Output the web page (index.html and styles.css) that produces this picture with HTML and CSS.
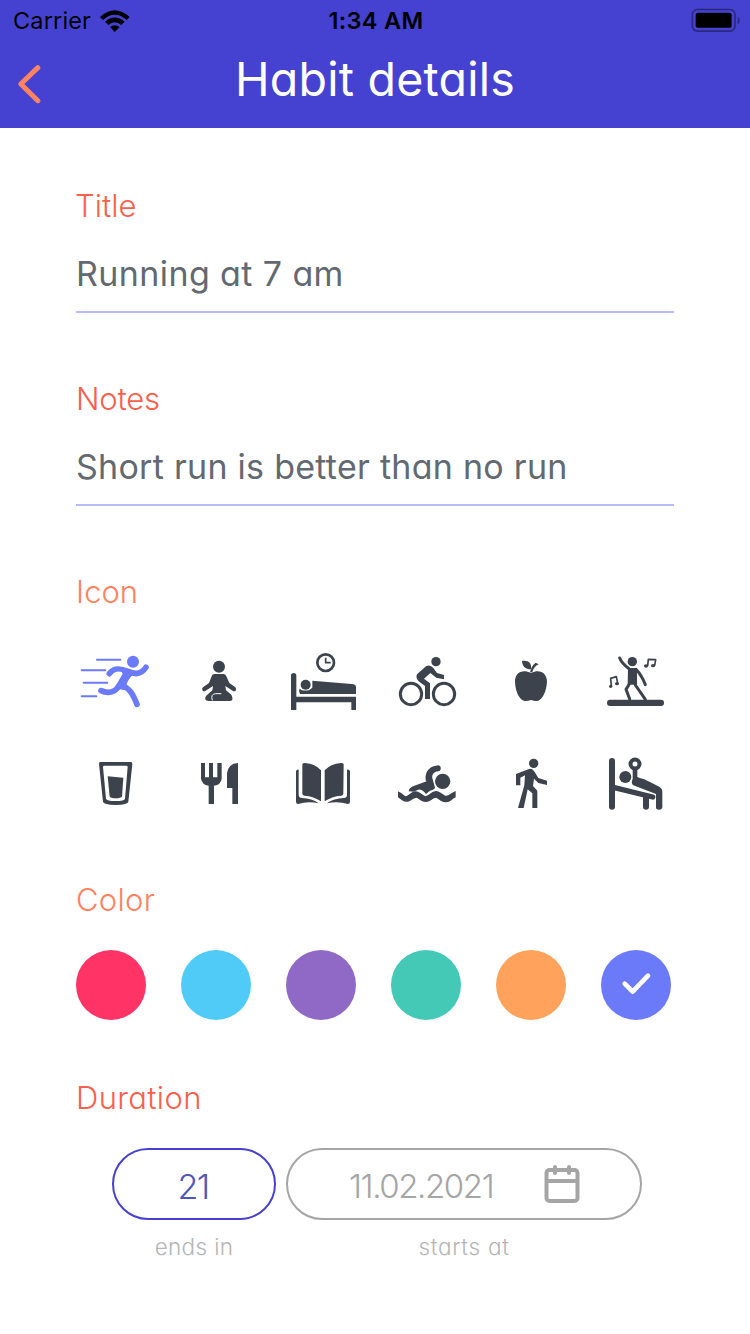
FILE: index.html
```html
<!DOCTYPE html>
<html lang="en">
<head>
<meta charset="utf-8">
<title>Habit details</title>
<link rel="stylesheet" href="styles.css">
</head>
<body>
<header class="header">
  <div class="status">
    <div class="status-left"><span class="carrier">Carrier</span>
      <svg class="wifi" viewBox="299 27 90 66"><path d="M299 48Q343 8 388 48L379 57Q343 25 308 57Z"/><path d="M314 62Q343 37 373 62L363 72Q343 55 324 72Z"/><path d="M329 78Q343 67 358 78L343 93Z"/></svg>
    </div>
    <span class="time">1:34 AM</span>
    <svg class="battery" viewBox="946 22 150 74"><rect x="950" y="26" width="128" height="65" rx="15" fill="none" stroke="#2b287b" stroke-width="5"/><rect x="960" y="36" width="108" height="45" rx="8"/><path d="M1086 48Q1092 51 1092 59T1086 70Z" fill="#2b287b"/></svg>
  </div>
  <div class="nav">
    <svg class="back" viewBox="50 192 74 120"><path d="M112 203L61 252L112 302" fill="none" stroke="#ff8360" stroke-width="15" stroke-linecap="round" stroke-linejoin="round"/></svg>
    <h1 class="heading">Habit details</h1>
    <span class="nav-end"></span>
  </div>
</header>
<main class="form">
  <section class="field"><h2 class="label label-title">Title</h2><div class="value value-title">Running at 7 am</div></section>
  <section class="field"><h2 class="label label-notes">Notes</h2><div class="value value-notes">Short run is better than no run</div></section>
  <section class="icon-section">
    <h2 class="label light label-icon">Icon</h2>
    <div class="icons">
      <svg class="icon selected" viewBox="15 6 240 240"><g class="line w6"><path d="M81 59H151M35 91H106M41 128H112M35 169H79"/></g><circle cx="189" cy="65" r="18"/><path class="line w17" d="M118 101C130 84 146 82 174 94C194 104 214 104 228 82M93 152C117 163 136 155 147 137M160 138C181 147 190 166 201 193"/><path d="M148 82L190 103Q174 118 168 138L169 151L148 148L138 136L158 101Z"/></svg>
      <svg class="icon" viewBox="327 6 240 240"><circle cx="447" cy="80" r="18"/><path d="M433 102H461Q467 102 470 111L478 129L496 142Q500 146 497 152Q493 156 488 152L466 138L468 151L484 164Q493 182 480 183H416Q400 182 408 168L427 151L429 138L407 152Q402 156 398 152Q394 146 399 142L417 129L425 109Q427 102 433 102Z"/><path d="M427 181Q421 162 437 161H454" fill="none" stroke="#fff" stroke-width="3"/></svg>
      <svg class="icon" viewBox="9 6 240 240"><circle class="line w8" cx="137" cy="68" r="25"/><path class="line w5 butt" d="M137 53V68H152"/><path d="M33 107Q33 99 41 99T49 107V170H228V210H214V187H49V210H33Z"/><circle cx="77" cy="134" r="15"/><path d="M59 146Q68 155 88 150L97 143V122L215 132Q228 133 228 141V162H60Q54 154 59 146Z"/></svg>
      <svg class="icon" viewBox="321 6 240 240"><circle class="line w9" cx="393" cy="162" r="32"/><circle class="line w9" cx="492" cy="162" r="32"/><circle cx="468" cy="65" r="14"/><path d="M411 103L438 79Q450 72 460 84L471 99L492 105V118L469 113L451 99L432 116L450 130V177H435V138L416 124Q406 114 411 103Z"/></svg>
      <svg class="icon" viewBox="3 6 240 240"><path d="M123 99C150 86 170 99 171 124C170 153 158 180 142 183Q134 184 123 180Q112 184 104 183C88 180 76 154 75 125C75 99 96 86 123 99Z"/><path d="M96 63C114 60 126 68 123 88C106 88 97 79 96 63ZM120 97Q124 78 137 68L146 73Q131 80 127 97Z"/></svg>
      <svg class="icon" viewBox="315 6 240 240"><rect x="351" y="179" width="171" height="19" rx="9"/><circle cx="427" cy="65" r="14"/><path d="M414 84H441V134H413Z"/><path class="line w9" d="M389 54Q395 70 417 86M438 88Q455 106 466 134M417 134L408 148L419 177M436 135L466 178"/><g class="line w5"><path d="M473 77L475 58L497 59L494 76M364 136L362 115L379 110L383 130"/></g><ellipse cx="468" cy="78" rx="6" ry="5"/><ellipse cx="489" cy="77" rx="6" ry="5"/><ellipse cx="362" cy="139" rx="5" ry="5"/><ellipse cx="381" cy="131" rx="6" ry="5"/></svg>
      <svg class="icon" viewBox="15 -3 240 240"><path fill-rule="evenodd" d="M90 51H183Q187 51 187 57L175 170Q174 179 137 180Q100 179 99 170L87 57Q87 51 90 51ZM99 66L108 161Q110 168 137 168T165 161L173 66Q173 62 169 62H103Q99 62 99 66Z"/><path d="M113 94L160 98L156 155Q153 159 137 160Q121 159 119 155Z"/></svg>
      <svg class="icon" viewBox="327 -3 240 240"><path d="M393 54H405V97H417V54H429V97H442V54H455V101Q453 119 432 122V177H416V122Q396 119 393 101ZM504 54V177H487V129H471V85Q475 55 504 54Z"/></svg>
      <svg class="icon" viewBox="9 -3 240 240"><path d="M67 58Q68 54 75 54Q106 56 123 76V169Q102 154 73 152Q67 151 67 146ZM191 58Q190 54 183 54Q151 57 134 76V169Q155 154 184 152Q190 151 190 146ZM56 74V151Q56 158 65 159Q96 160 116 175Q84 168 54 177Q48 177 48 170V79Q49 73 56 74ZM201 74V151Q201 158 192 159Q161 160 141 175Q173 168 204 177Q210 177 210 170V79Q209 73 201 74Z"/></svg>
      <svg class="icon" viewBox="321 -3 240 240"><circle cx="488" cy="109" r="23"/><path d="M437 106C434 78 450 63 476 61Q484 64 482 73Q481 79 475 79C459 81 454 91 458 103L465 128Q463 134 450 137L438 147Q426 132 414 134L402 140L386 139Q387 127 403 122L440 109Z"/><path d="M354 139Q365 144 375 153Q381 155 388 148Q405 132 421 144L434 153Q440 155 449 147Q466 132 482 143L496 152Q504 154 514 145L527 138V157Q519 161 512 167Q498 176 482 167L469 158Q462 158 454 165Q439 176 424 167L410 158Q402 158 393 166Q380 175 366 166L354 157Z"/></svg>
      <svg class="icon" viewBox="3 -3 240 240"><circle cx="131" cy="55" r="14"/><path d="M78 87L115 73Q126 68 134 81L145 99L171 107V120L145 114L132 101L129 123L142 137V189H127V145L113 133L101 189H84L103 121L105 91L91 98V121H78Z"/></svg>
      <svg class="icon" viewBox="315 -3 240 240"><path class="line w18" d="M366 48V185M468 155V185"/><path class="line w16" d="M370 127L488 156"/><circle cx="406" cy="96" r="18"/><circle class="line w12" cx="435" cy="57" r="13.5"/><path class="line w14" d="M435 73V107"/><path d="M428 103L442 96Q451 100 463 103L508 125Q516 130 517 139V185Q517 194 507 194T498 185V147L430 121Q422 116 428 103Z"/></svg>
    </div>
  </section>
  <section class="color-section">
    <h2 class="label light label-color">Color</h2>
    <div class="colors">
      <span class="swatch red"></span><span class="swatch sky"></span><span class="swatch purple"></span><span class="swatch teal"></span><span class="swatch orange"></span>
      <span class="swatch indigo"><svg class="check" viewBox="363 60 210 210"><path d="M434 161L458 185L504 137" fill="none" stroke="#fff" stroke-width="14" stroke-linecap="round" stroke-linejoin="round"/></svg></span>
    </div>
  </section>
  <section class="duration-section">
    <h2 class="label label-duration">Duration</h2>
    <div class="pills">
      <div class="pill-col short"><div class="pill days"><span class="days-text">21</span></div><span class="hint hint-end">ends in</span></div>
      <div class="pill-col long"><div class="pill date"><span class="date-text">11.02.2021</span>
        <svg class="calendar" viewBox="0 0 36 40"><g fill="none" stroke="#a5a5a5" stroke-width="4" stroke-linecap="round" stroke-linejoin="round"><rect x="2.5" y="6" width="31" height="31" rx="3"/><path d="M3 17H33M11 3V9M25 3V9"/></g></svg></div><span class="hint hint-start">starts at</span></div>
    </div>
  </section>
</main>
</body>
</html>
```
FILE: styles.css
```css
* { box-sizing: border-box; }
body { margin: 0; width: 750px; height: 1334px; overflow: hidden; background: #fff; font-family: Inter, "Liberation Sans", sans-serif; font-feature-settings: "cv11"; }
h1, h2 { margin: 0; font-weight: 300; }
span, h1, h2, .value { white-space: nowrap; }
.header { height: 128px; background: #4642d1; }
.status { height: 40px; display: grid; grid-template-columns: 1fr auto 1fr; align-items: center; padding: 0 9px 2px 13px; font-feature-settings: normal; color: #000; }
.status-left { display: flex; align-items: center; gap: 9px; }
.carrier { font-size: 23.5px; letter-spacing: 0.15px; line-height: 42px; }
.wifi { width: 30px; height: 22px; }
.time { font-size: 23.5px; font-weight: 600; letter-spacing: 0.3px; line-height: 42px; margin-right: 2px; }
.battery { width: 50px; height: 25px; justify-self: end; margin-top: -2px; }
.nav { height: 88px; display: flex; justify-content: space-between; align-items: flex-start; padding: 0 17px; }
.back { width: 25px; height: 40px; margin-top: 24px; }
.nav-end { width: 25px; }
.heading { color: #fff; font-size: 46.5px; font-weight: 400; line-height: 56px; margin-top: 11px; letter-spacing: 0.25px; }
.form { padding: 57px 76px 0; }
.field { height: 193px; }
.label { color: #f95f4d; font-size: 31px; line-height: 42px; }
.light { color: #ff8360; }
.label-title { text-indent: -1px; }
.label-notes { letter-spacing: -0.2px; }
.label-color { letter-spacing: 0.3px; }
.label-duration { letter-spacing: 0.35px; }
.value { height: 86px; border-bottom: 2px solid #b5bcff; color: #636970; font-size: 34px; line-height: 48px; padding-top: 23px; }
.value-title { letter-spacing: 0.4px; }
.value-notes { letter-spacing: 0.27px; }
.icon-section { height: 308px; }
.icons { display: grid; grid-template-columns: repeat(6, 80px); gap: 22px 24px; margin: 29px 0 0 -1px; }
.icon { width: 80px; height: 80px; fill: #3c434d; color: #3c434d; }
.selected { fill: #6b7af9; color: #6b7af9; }
.line { fill: none; stroke: currentColor; stroke-linecap: round; stroke-linejoin: round; }
.butt { stroke-linecap: butt; }
.w5 { stroke-width: 5; }
.w6 { stroke-width: 6; }
.w8 { stroke-width: 8; }
.w9 { stroke-width: 9; }
.w12 { stroke-width: 12; }
.w14 { stroke-width: 14; }
.w16 { stroke-width: 16; }
.w17 { stroke-width: 17; }
.w18 { stroke-width: 18; }
.color-section { height: 198px; }
.colors { display: flex; gap: 35px; margin-top: 29px; }
.swatch { width: 70px; height: 70px; border-radius: 50%; flex: none; }
.check { display: block; width: 70px; height: 70px; }
.red { background: #ff3366; }
.sky { background: #50cbf7; }
.purple { background: #9069c6; }
.teal { background: #43c9b6; }
.orange { background: #ffa35c; }
.indigo { background: #6b7af9; }
.pills { display: flex; gap: 10px; margin: 29px 0 0 36px; }
.pill-col { display: flex; flex-direction: column; align-items: center; }
.short { width: 164px; }
.long { width: 356px; }
.pill { width: 100%; height: 72px; border: 2px solid #a5a5a5; border-radius: 36px; display: flex; align-items: center; color: #a5a5a5; font-weight: 300; }
.days { border-color: #4642d1; color: #5055b8; justify-content: center; font-size: 34px; letter-spacing: -1.5px; padding: 4px 2px 0 0; }
.date { padding-left: 61px; }
.date-text { width: 195px; font-size: 33px; letter-spacing: -1.4px; padding-top: 4px; }
.calendar { width: 36px; height: 40px; }
.hint { color: #b5b5b5; font-size: 22.5px; font-weight: 300; line-height: 30px; margin-top: 12px; }
.hint-end { letter-spacing: 0.35px; }
.hint-start { letter-spacing: 0.7px; }
```
